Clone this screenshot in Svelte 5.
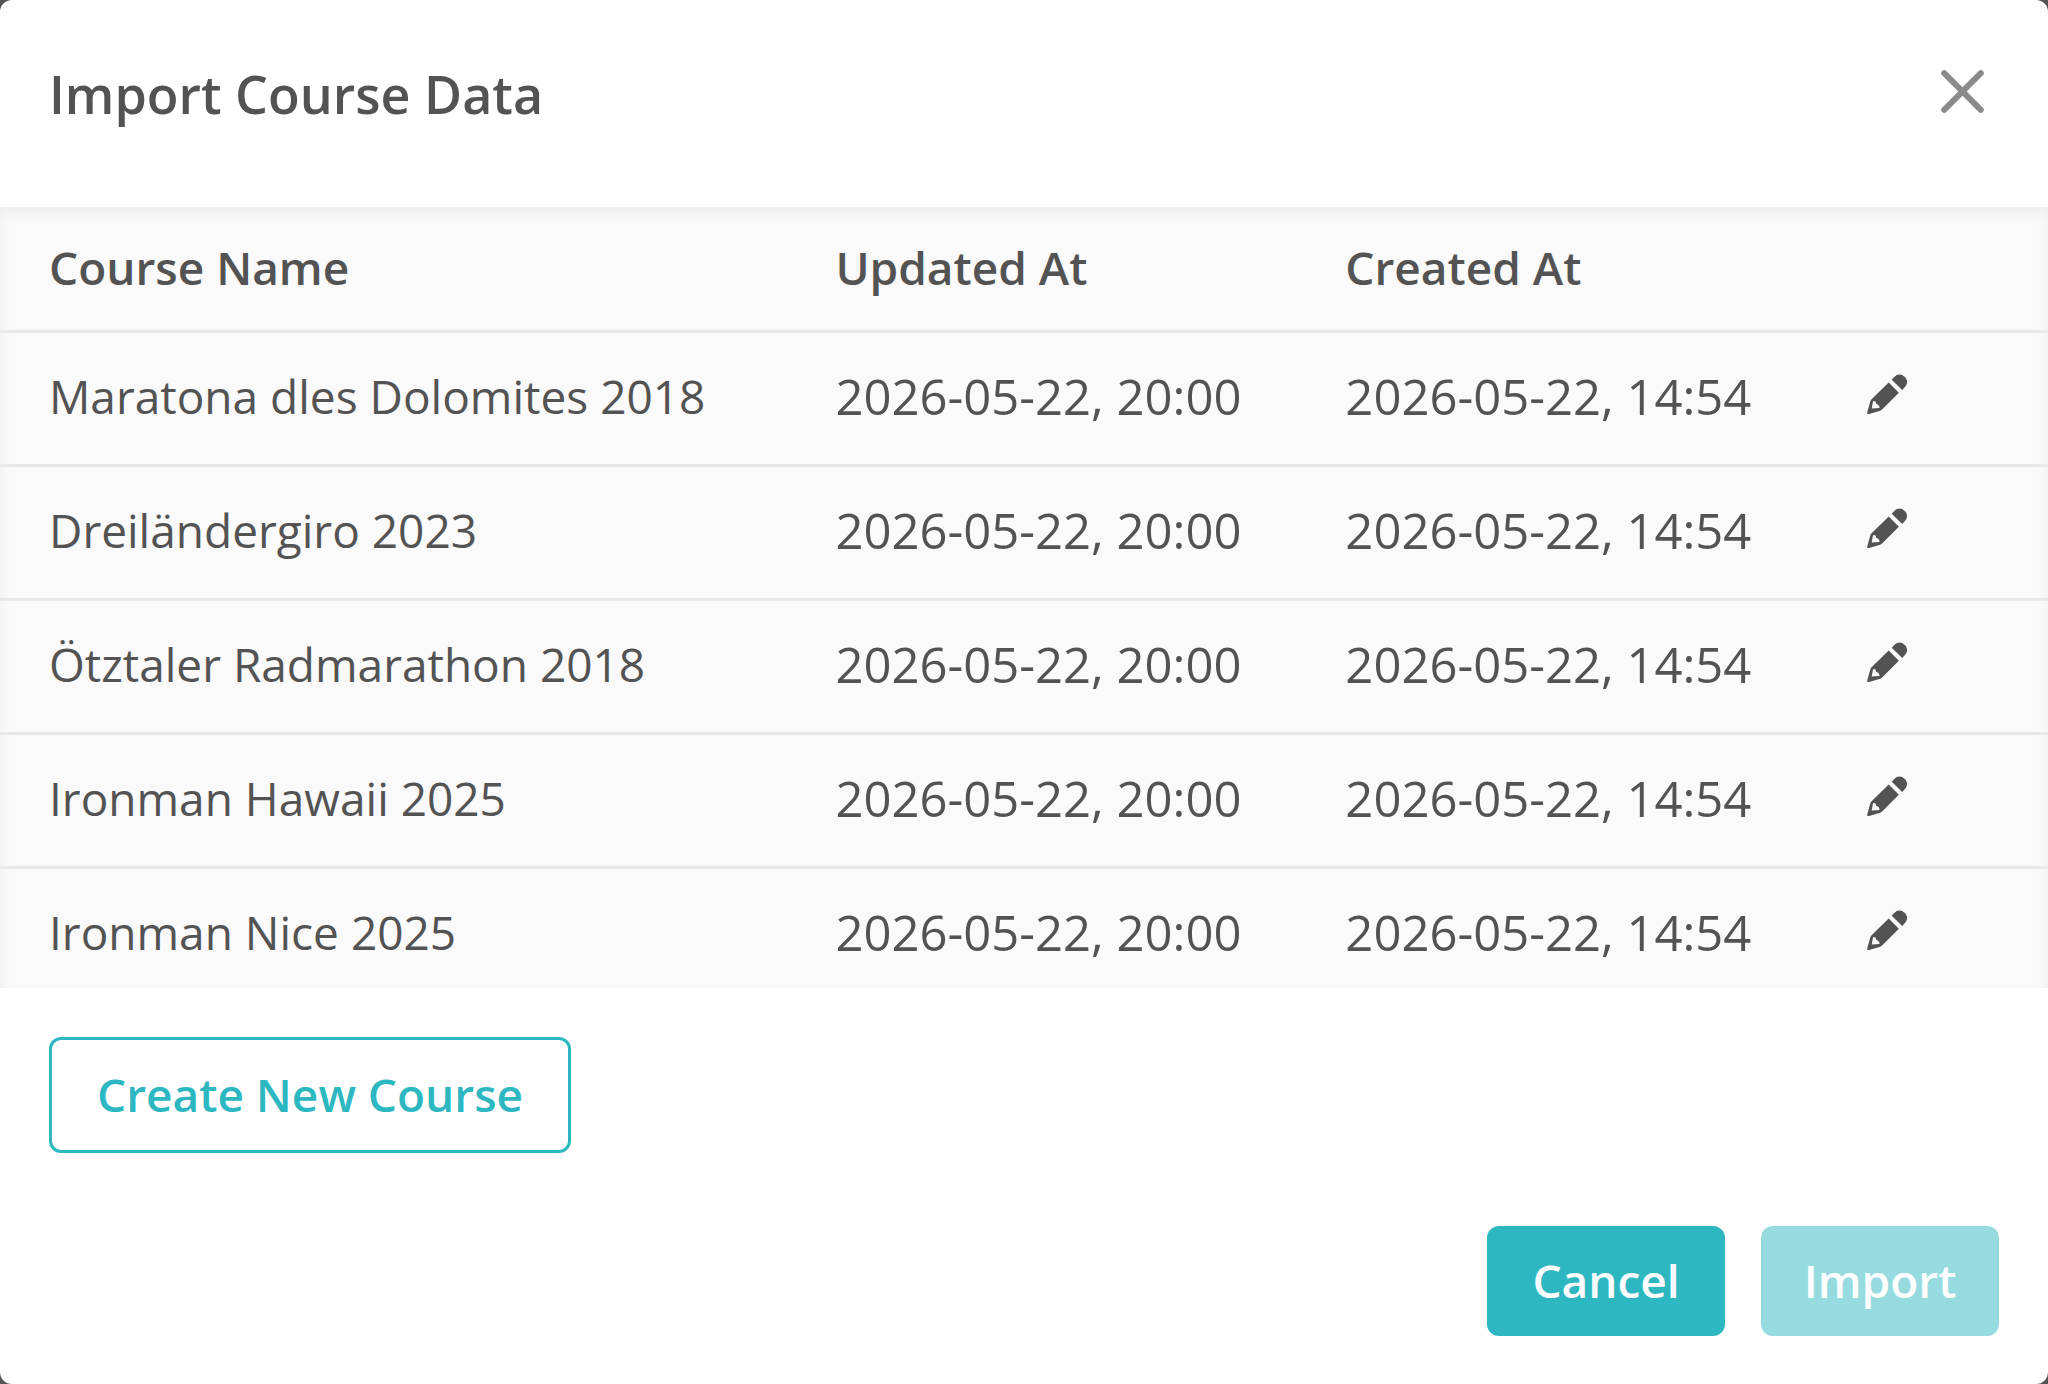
<script>
  const courses = [
    'Maratona dles Dolomites 2018',
    'Dreiländergiro 2023',
    'Ötztaler Radmarathon 2018',
    'Ironman Hawaii 2025',
    'Ironman Nice 2025'
  ].map((name) => ({ name, updated: '2026-05-22, 20:00', created: '2026-05-22, 14:54' }));
</script>

<div class="backdrop">
  <div class="dialog" role="dialog" aria-modal="true" aria-labelledby="dialog-title">
    <header>
      <h1 id="dialog-title">Import Course Data</h1>
      <button class="close" type="button" aria-label="Close">
        <svg viewBox="0 0 43 43" aria-hidden="true"><path d="M3.2 3.2 39.8 39.8M39.8 3.2 3.2 39.8" /></svg>
      </button>
    </header>

    <div class="courses">
      <table>
        <colgroup>
          <col class="name" />
          <col class="updated" />
          <col class="created" />
          <col />
        </colgroup>
        <thead>
          <tr>
            <th scope="col">Course Name</th>
            <th scope="col">Updated At</th>
            <th scope="col">Created At</th>
            <td></td>
          </tr>
        </thead>
        <tbody>
          {#each courses as course}
            <tr>
              <td>{course.name}</td>
              <td class="date">{course.updated}</td>
              <td class="date">{course.created}</td>
              <td>
                <button class="edit" type="button" aria-label="Edit {course.name}">
                  <svg viewBox="0 0 118 118" aria-hidden="true">
                    <path d="M73 17 81 8Q91-2 104 3Q115 9 118 21Q119 30 113 37L104 47Z" />
                    <path fill-rule="evenodd" d="M64 25 94 55 46 103Q41 108 34 110L6 118Q-1 120 1 112L9 83Q10 77 15 73ZM21 80Q17 80 17 84L14 102 37 100Q37 94 33 91L27 88 26 84Q25 80 21 80Z" />
                  </svg>
                </button>
              </td>
            </tr>
          {/each}
        </tbody>
      </table>
    </div>

    <div class="create">
      <button class="btn outline" type="button">Create New Course</button>
    </div>

    <footer>
      <button class="btn" type="button">Cancel</button>
      <button class="btn" type="button" disabled>Import</button>
    </footer>
  </div>
</div>

<style>
  :global(body) {
    margin: 0;
  }

  .backdrop {
    height: 100vh;
    background: #555;
  }

  .dialog {
    box-sizing: border-box;
    display: flex;
    flex-direction: column;
    height: 100%;
    overflow: hidden;
    border-radius: 12px;
    background: #fff;
    color: #535353;
    font-family: 'Open Sans', 'Noto Sans', sans-serif;
    font-size: 46px;
    line-height: 64px;
  }

  header {
    display: flex;
    align-items: flex-start;
    justify-content: space-between;
    padding: 58px 49px 77px;
  }

  h1 {
    margin: 0;
    font-size: 52px;
    line-height: 72px;
    font-weight: 600;
  }

  button {
    font: inherit;
    cursor: pointer;
  }

  .close {
    display: flex;
    padding: 12px 15px;
    border: 0;
    background: none;
  }

  .close svg {
    width: 43px;
    height: 43px;
    fill: none;
    stroke: #8a8a8a;
    stroke-width: 6;
    stroke-linecap: round;
  }

  .courses {
    flex: 1;
    min-height: 0;
    overflow-y: auto;
    scrollbar-width: none;
    background: #fafafa;
    box-shadow: inset 0 6px 14px rgba(0, 0, 0, 0.05);
  }

  table {
    width: 100%;
    table-layout: fixed;
    border-collapse: separate;
    border-spacing: 0;
  }

  .name {
    width: 38.4%;
  }

  .updated {
    width: 24.9%;
  }

  .created {
    width: 24.7%;
  }

  th,
  td {
    padding: 31px 0 36px 49px;
    border-bottom: 3px solid #e8e8e8;
    text-align: left;
    white-space: nowrap;
  }

  th {
    padding: 28px 0 31px 49px;
    font-weight: 600;
  }

  thead td {
    padding: 0;
  }

  .date {
    font-size: 49px;
  }

  .edit {
    display: flex;
    padding: 10px 16px 14px;
    border: 0;
    background: none;
  }

  .edit svg {
    width: 40px;
    height: 40px;
    fill: #535353;
  }

  .create {
    padding: 49px 49px 0;
  }

  footer {
    display: flex;
    justify-content: flex-end;
    gap: 36px;
    padding: 73px 49px 48px;
  }

  .btn {
    min-width: 238px;
    padding: 22px 40px 24px;
    border: 0;
    border-radius: 12px;
    background: #2cb7c1;
    color: #fff;
    font-weight: 600;
  }

  .btn.outline {
    display: block;
    padding: 22px 45px 24px;
    border: 3px solid #2cb7c1;
    background: #fff;
    color: #2cb7c1;
  }

  .btn:disabled {
    background: #96dbe0;
    cursor: default;
  }
</style>
